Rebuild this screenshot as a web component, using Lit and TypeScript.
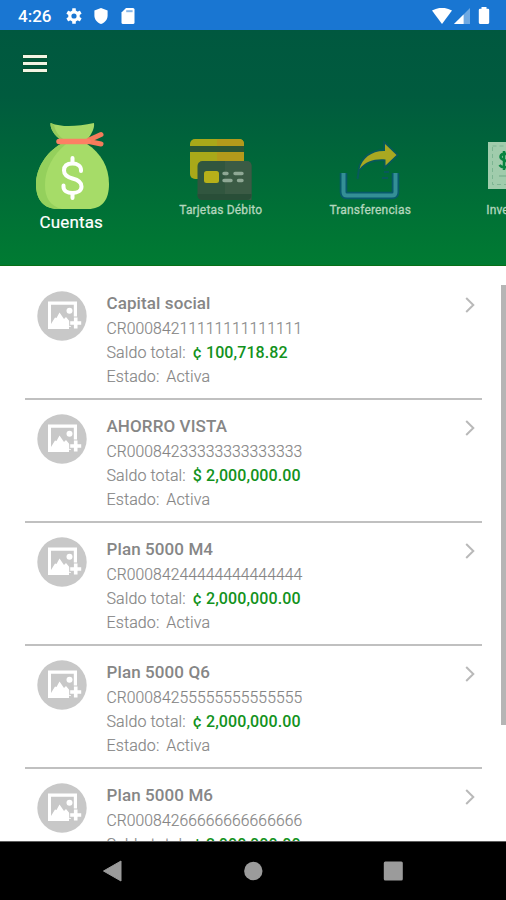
import { LitElement, html, css, svg } from "lit";
import { customElement, property } from "lit/decorators.js";

interface Account {
  name: string;
  iban: string;
  balance: string;
}

const ACCOUNTS: Account[] = [
  { name: "Capital social", iban: "CR00084211111111111111", balance: "¢ 100,718.82" },
  { name: "AHORRO VISTA", iban: "CR00084233333333333333", balance: "$ 2,000,000.00" },
  { name: "Plan 5000 M4", iban: "CR00084244444444444444", balance: "¢ 2,000,000.00" },
  { name: "Plan 5000 Q6", iban: "CR00084255555555555555", balance: "¢ 2,000,000.00" },
  { name: "Plan 5000 M6", iban: "CR00084266666666666666", balance: "¢ 2,000,000.00" },
];

const TEETH = [0, 60, 120, 180, 240, 300];

@customElement("status-bar")
class StatusBar extends LitElement {
  static styles = css`
    :host {
      display: flex;
      align-items: center;
      height: 30px;
      flex: none;
      box-sizing: border-box;
      padding: 1px 16px 0 18px;
      background: #1976d2;
      color: #fff;
    }
    .time {
      font-size: 17px;
      font-weight: 500;
      width: 48px;
      line-height: 28px;
    }
    .left {
      display: flex;
      gap: 11px;
      flex: 1;
    }
    svg {
      display: block;
    }
    .wifi {
      margin-right: 2px;
    }
    .cell {
      margin-right: 8px;
    }
  `;
  render() {
    return html`
      <span class="time">4:26</span>
      <div class="left">
        <svg width="16" height="16" viewBox="0 0 16 16">
          <circle cx="8" cy="8" r="4.2" fill="none" stroke="#fff" stroke-width="3.2" />
          ${TEETH.map(
            (a) => svg`<rect x="6.2" y="0.2" width="3.6" height="3.6" rx="0.5" fill="#fff" transform="rotate(${a} 8 8)"/>`
          )}
        </svg>
        <svg width="16" height="16" viewBox="0 0 16 16">
          <path d="M8 0 L14.6 2.6 V7.5 C14.6 11.5 11.8 14.8 8 16 C4.2 14.8 1.4 11.5 1.4 7.5 V2.6Z" fill="#fff" />
        </svg>
        <svg width="16" height="16" viewBox="0 0 16 16">
          <path d="M6 0 H13 Q14.5 0 14.5 1.5 V14.5 Q14.5 16 13 16 H3 Q1.5 16 1.5 14.5 V4.6Z" fill="#fff" />
          <path d="M6.2 3.2H12.6" stroke="#86b6e8" stroke-width="2" />
        </svg>
      </div>
      <svg class="wifi" width="20" height="16" viewBox="0 0 20 16">
        <path d="M0 2.6 Q10 -3 20 2.6 L10 16Z" fill="#fff" />
      </svg>
      <svg class="cell" width="16" height="16" viewBox="0 0 16 16">
        <path d="M16 0 V16 H0Z" fill="#6fa9e2" />
        <path d="M9.6 6.4 V16 H0Z" fill="#fff" />
      </svg>
      <svg width="12" height="17" viewBox="0 0 12 17">
        <path d="M3.5 0 H8.5 V1.8 H10 Q11.2 1.8 11.2 3 V15.6 Q11.2 17 10 17 H2 Q.8 17 .8 15.6 V3 Q.8 1.8 2 1.8 H3.5Z" fill="#fff" />
      </svg>
    `;
  }
}

@customElement("service-header")
class ServiceHeader extends LitElement {
  static styles = css`
    :host {
      display: flex;
      flex-direction: column;
      flex: none;
      height: 236px;
      overflow: hidden;
      box-sizing: border-box;
      background: linear-gradient(#00583f 0%, #005b3e 28%, #007b32 100%);
      border-bottom: 1px solid #087018;
    }
    .menu {
      display: flex;
      flex-direction: column;
      gap: 4px;
      width: 24px;
      margin: 25px 0 0 23px;
    }
    .bar {
      height: 3px;
      background: #f3f4e4;
      box-shadow: 0 0 1.5px #1f3a00;
    }
    .tabs {
      display: flex;
      margin: 50px 0 0 -3.5px;
    }
    .tab {
      flex: 0 0 149.5px;
      display: flex;
      flex-direction: column;
      align-items: center;
      height: 112px;
    }
    svg {
      display: block;
      height: 88px;
      flex: none;
    }
    .active svg {
      margin-left: 3px;
    }
    .label {
      font-size: 12px;
      line-height: 14px;
      margin-top: -7px;
      color: #b4d6bd;
      white-space: nowrap;
      letter-spacing: 0.17px;
      -webkit-text-stroke: 0.3px #b4d6bd;
    }
    .active .label {
      font-size: 17px;
      line-height: 20px;
      margin-top: 2px;
      color: #fff;
      -webkit-text-stroke: 0.2px #fff;
    }
    .wide {
      margin-right: 4px;
    }
  `;
  render() {
    return html`
      <div class="menu"><div class="bar"></div><div class="bar"></div><div class="bar"></div></div>
      <div class="tabs">
        <div class="tab active">
          <svg width="76" viewBox="0 0 76 88">
            <path d="M15.500 1 C29 6 43 4 59 1 C60 7 55 14 52 18 V24 H26 V18 C20 14 15 7 15.500 1Z" fill="#a6d867" />
            <path d="M15.500 1 L19 2.500 C20 9 24 15 30 18 H26 C20 14 15 7 15.500 1Z" fill="#94c95b" />
            <path d="M26 22 H52 C66 31 74 45 74 62 C74 78 67 87 53 87 H23 C9 87 1 78 1 62 C1 47 11 30 26 22Z" fill="#a6dc68" />
            <path d="M26 22 H31 C18 33 10 47 10 63 C10 76 15 84 27 87 H23 C9 87 1 78 1 62 C1 47 11 30 26 22Z" fill="#94d05c" />
            <path d="M54 18 L66 12.500 M54 19.500 L66 22" stroke="#f57b5b" stroke-width="5" stroke-linecap="round" />
            <path d="M24 19.500 H53" stroke="#fc8064" stroke-width="5.500" stroke-linecap="round" />
            <path d="M37.500 36 V41 M37.500 71 V76" stroke="#fff" stroke-width="4" stroke-linecap="round" />
            <path d="M46 49 V48 C46 44 42.500 41.500 37.500 41.500 C32 41.500 29 44 29 48.500 C29 53 32 55 37.500 56.500 C43.500 58 46.500 60 46.500 64.500 C46.500 68.500 43 71 37.500 71 C32 71 28.500 68.500 28.500 65 V63.500" fill="none" stroke="#fff" stroke-width="4" stroke-linecap="round" />
          </svg>
          <span class="label">Cuentas</span>
        </div>
        <div class="tab">
          <svg width="64" viewBox="0 0 64 88">
            <rect x="1" y="17" width="54" height="40" rx="5" fill="#a9a819" />
            <path d="M28 17 H50 Q55 17 55 22 V57 H28Z" fill="#b39a1b" />
            <path d="M1 24 H55 V30 H1Z" fill="#2b5635" />
            <rect x="8.500" y="39" width="54" height="39" rx="5" fill="#31563f" />
            <path d="M36 39 H57.500 Q62.500 39 62.500 44 V78 H36Z" fill="#3b5b45" />
            <path d="M8.500 72 H62.500 V73 Q62.500 78 57.500 78 H13.500 Q8.500 78 8.500 73Z" fill="#294e38" />
            <rect x="15" y="49" width="15" height="12" rx="2.500" fill="#b7b019" />
            <path d="M35 51.500 H38 M46 51.500 H53 M35 58.500 H42 M49.500 58.500 H53" stroke="#8fa895" stroke-width="3.400" stroke-linecap="round" />
          </svg>
          <span class="label">Tarjetas Débito</span>
        </div>
        <div class="tab">
          <svg width="62" viewBox="0 0 62 88">
            <path d="M4.500 51 V70 Q4.500 73.500 8 73.500 H53 Q56.500 73.500 56.500 70 V51" fill="none" stroke="#075a6b" stroke-width="7.500" />
            <path d="M4.500 51 V70 Q4.500 73.500 8 73.500 H53 Q56.500 73.500 56.500 70 V51" fill="none" stroke="#348f96" stroke-width="4" />
            <path d="M46 22 L57.500 33 L46.500 43.500 V37.500 C36 36.500 27 39 20.500 47 C23 36 33 28.500 46 29Z" fill="#a9a821" stroke="#075a5a" stroke-width="3.500" paint-order="stroke" />
            <path d="M20 47 L18.500 57 M45 50 H50 M43 56 H49" stroke="#075a5a" stroke-width="2" />
          </svg>
          <span class="label">Transferencias</span>
        </div>
        <div class="tab">
          <svg width="64" viewBox="0 0 64 88">
            <rect x="0" y="20" width="64" height="47" fill="#a0ccac" />
            <rect x="4.500" y="24" width="55" height="38.500" fill="none" stroke="#7db592" stroke-width="1" stroke-dasharray="4 3" />
            <path d="M16 29 V48 M20.500 33.500 C18 30.500 12.500 31.500 12.500 35 C12.500 39 20.500 37.500 20.500 42 C20.500 46 14 46.500 11.500 43" fill="none" stroke="#07833f" stroke-width="2.500" />
            <path d="M11 54 H40" stroke="#6ea985" stroke-width="1" />
          </svg>
          <span class="label wide">Inversiones</span>
        </div>
      </div>
    `;
  }
}

@customElement("account-row")
class AccountRow extends LitElement {
  @property({ attribute: false }) account!: Account;
  static styles = css`
    :host {
      display: flex;
      flex: none;
      box-sizing: border-box;
      height: 123px;
      margin: 0 24px 0 25px;
      padding: 14px 7px 0 12px;
      border-bottom: 2px solid #c0c0c0;
    }
    svg {
      flex: none;
      display: block;
    }
    .info {
      flex: 1;
      margin-left: 19.5px;
      font-size: 16px;
      line-height: 24.5px;
      font-weight: 300;
      color: #858585;
      white-space: nowrap;
      letter-spacing: 0.1px;
      -webkit-text-stroke: 0.15px #858585;
    }
    .name {
      font-size: 17px;
      padding-top: 1px;
      line-height: 23.5px;
      font-weight: 500;
      color: #868686;
      -webkit-text-stroke: 0;
    }
    .iban {
      font-size: 15.7px;
      line-height: 25px;
      letter-spacing: 0.07px;
    }
    .amount {
      font-weight: 500;
      color: #129220;
      margin-left: 3px;
      -webkit-text-stroke: 0;
    }
    .state {
      margin-left: 3px;
    }
    .chevron {
      margin-top: 6px;
    }
  `;
  render() {
    const a = this.account;
    return html`
      <svg width="50" height="50" viewBox="0 0 50 50">
        <circle cx="25" cy="25" r="24.700" fill="#c8c8c8" />
        <path d="M11 10.500 H40 V27 H36.800 V13.800 H14 V35 H32 V38 H11Z" fill="#fff" />
        <path d="M14 36 V33 L18 26.500 L19.500 27 L22.500 21.500 L27 28 L29 26 L34 32 V36Z" fill="#fff" />
        <circle cx="32.500" cy="19.700" r="3" fill="#fff" />
        <path d="M38.700 25.500 V38.500 M32.200 32 H45.200" stroke="#c8c8c8" stroke-width="6.500" />
        <path d="M38.700 26.500 V37.500 M33.200 32 H44.200" stroke="#fff" stroke-width="3.600" />
      </svg>
      <div class="info">
        <div class="name">${a.name}</div>
        <div class="iban">${a.iban}</div>
        <div>Saldo total: <span class="amount">${a.balance}</span></div>
        <div>Estado: <span class="state">Activa</span></div>
      </div>
      <svg class="chevron" width="10" height="16" viewBox="0 0 10 16">
        <path d="M1.200 1 L8.300 8 L1.200 15" fill="none" stroke="#b9b9b9" stroke-width="2" />
      </svg>
    `;
  }
}

@customElement("nav-bar")
class NavBar extends LitElement {
  static styles = css`
    :host {
      display: flex;
      align-items: center;
      justify-content: center;
      gap: 120px;
      flex: none;
      height: 59px;
      box-sizing: border-box;
      padding: 0 0 1px 0;
      border-top: 1px solid #5e5e5e;
      background: #000;
    }
    svg {
      display: block;
    }
  `;
  render() {
    return html`
      <svg width="20" height="22" viewBox="0 0 20 22"><path d="M18 1 V21 L0.500 11Z" fill="#9b9b9b" stroke="#9b9b9b" stroke-linejoin="round" /></svg>
      <svg width="20" height="20" viewBox="0 0 20 20"><circle cx="10.300" cy="10" r="9.200" fill="#9b9b9b" /></svg>
      <svg width="20" height="20" viewBox="0 0 20 20"><rect x="0.800" y="0.500" width="19" height="19" rx="1.500" fill="#9b9b9b" /></svg>
    `;
  }
}

@customElement("app-root")
class AppRoot extends LitElement {
  static styles = css`
    :host {
      display: flex;
      flex-direction: column;
      width: 506px;
      height: 900px;
      overflow: hidden;
      background: #fff;
      font-family: Roboto, "Liberation Sans", sans-serif;
    }
    .list {
      position: relative;
      flex: 1;
      min-height: 0;
      box-sizing: border-box;
      padding-top: 11px;
      overflow: hidden;
      display: flex;
      flex-direction: column;
    }
    .thumb {
      position: absolute;
      right: 0;
      top: 19px;
      width: 5px;
      height: 440px;
      background: #b5b5b5;
    }
  `;
  render() {
    return html`
      <status-bar></status-bar>
      <service-header></service-header>
      <div class="list">
        ${ACCOUNTS.map((a) => html`<account-row .account=${a}></account-row>`)}
        <div class="thumb"></div>
      </div>
      <nav-bar></nav-bar>
    `;
  }
}
